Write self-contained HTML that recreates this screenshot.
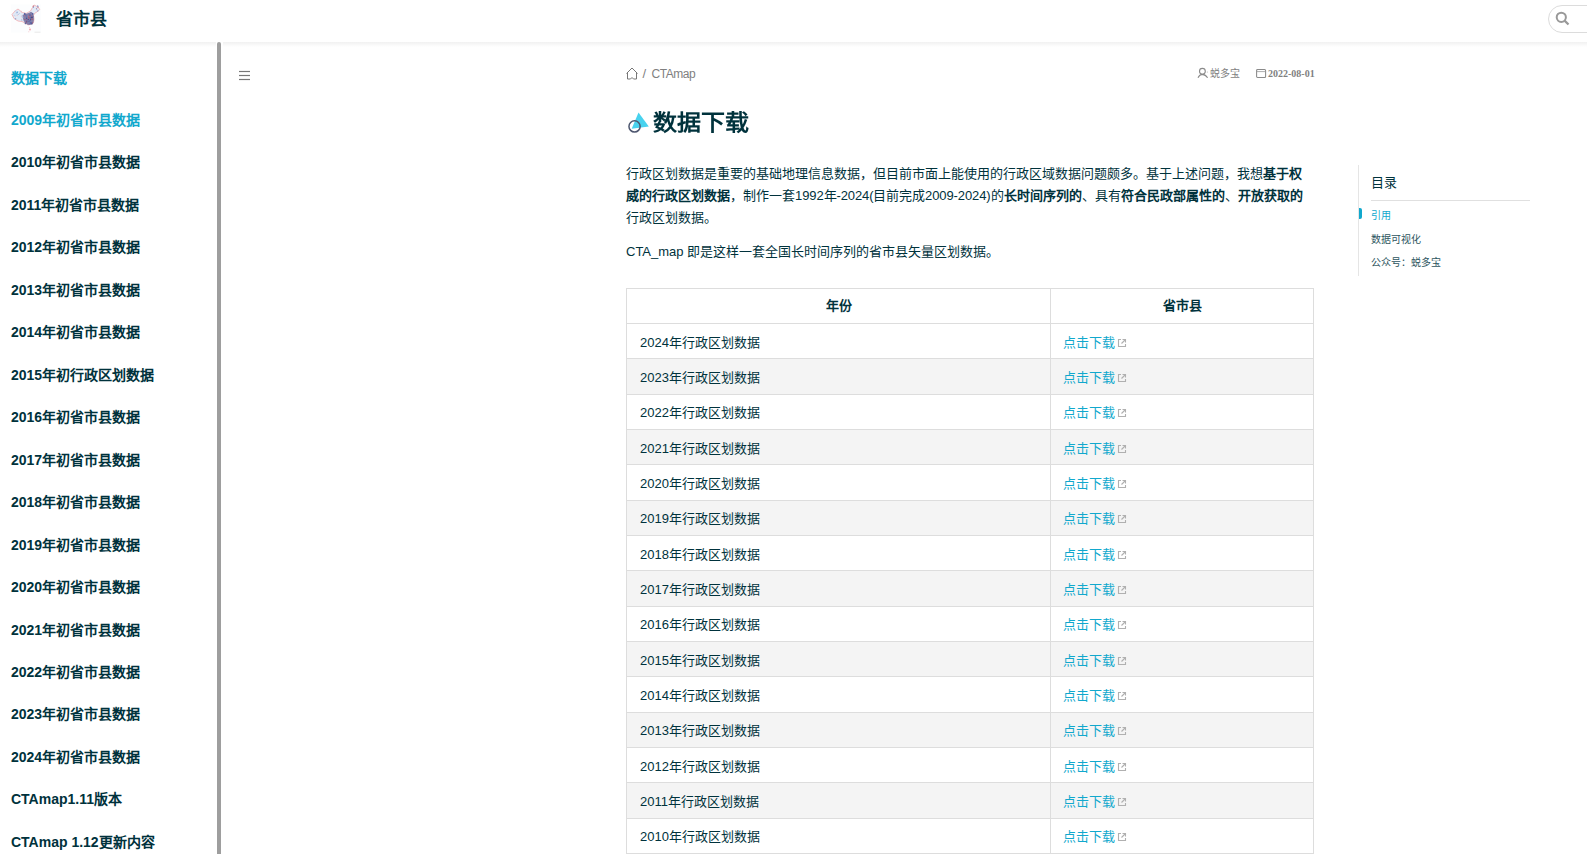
<!DOCTYPE html>
<html lang="zh-CN">
<head>
<meta charset="utf-8">
<title>数据下载 | 省市县</title>
<style>
html,body{margin:0;padding:0;}
body{width:1587px;height:854px;overflow:hidden;position:relative;background:#fff;font-family:"Liberation Sans",sans-serif;color:#00323c;}
.abs{position:absolute;white-space:nowrap;}
#hdr{position:absolute;left:0;top:0;width:1587px;height:42px;background:#fff;}
#hdrshadow{position:absolute;left:0;top:42px;width:1587px;height:5px;background:linear-gradient(#f1f1f1,rgba(255,255,255,0));}
#sitename{left:56px;top:9px;font-size:17px;line-height:22px;font-weight:bold;}
#search{position:absolute;left:1548px;top:5px;width:60px;height:28px;border:1px solid #dcdcdc;border-radius:14px;box-sizing:border-box;}
.side{left:11px;font-size:14px;line-height:20px;font-weight:bold;}
.side.act{color:#11a8cd;}
#track{position:absolute;left:216px;top:42px;width:7px;height:812px;background:#fff;}
#thumb{position:absolute;left:217px;top:42px;width:4px;height:830px;background:#9e9e9e;border-radius:2px;}
.gray{color:#7f7f7f;}
#title{left:653px;top:106px;font-size:24px;line-height:32px;font-weight:bold;transform:scaleY(0.88);transform-origin:0 27px;}
.para{position:absolute;left:626px;width:688px;font-size:13px;line-height:21.85px;}
.para b{font-weight:bold;}
a{color:#11a8cd;text-decoration:none;}
.toc{left:1371px;}
.hl{left:626px;width:688px;height:1px;background:#dddddd;}
.vl{top:288px;width:1px;height:566px;background:#dddddd;}
.th{text-align:center;font-size:13px;font-weight:bold;line-height:35.33px;}
.td{font-size:13px;line-height:35.33px;}
.ext{margin-left:1.5px;vertical-align:-1px;}
</style>
</head>
<body>
<div id="hdr"></div>
<div id="hdrshadow"></div>
<svg class="abs" style="left:10px;top:3px" width="34" height="32" viewBox="0 0 34 32">
 <defs><filter id="bl" x="-20%" y="-20%" width="140%" height="140%"><feGaussianBlur stdDeviation="0.4"/></filter></defs>
 <rect x="1" y="1.5" width="30" height="28" fill="#fcfdfe"/>
 <g filter="url(#bl)">
 <path d="M2,11.5 L5,8 L8,6 L10.5,8 L12.5,9.5 L16,10.5 L20.5,8 L22.5,4.5 L24,2 L28,4 L29.8,6.5 L27.5,8.5 L24.5,10.5 L23.5,12.5 L24,16 L23.5,19.5 L20,21.5 L18,22 L16,20.5 L12,18.5 L8,18 L4,15.5 Z" fill="#e2eaf6" stroke="#f2b4b8" stroke-width="0.9"/>
 <path d="M12.5,12 Q15,10.8 17,10.6 Q19.5,10 21,8.8 L23.3,10.2 Q23.6,12.5 23.8,14 Q24.3,17.5 23.2,20.2 Q21.5,21.8 19,22 Q17,22 15.5,20.3 Q13.5,18.5 13,16 Z" fill="#6c6496" opacity="0.8"/>
 <circle cx="16.5" cy="16.2" r="0.87" fill="#5a6ab0" opacity="0.7"/>
 <circle cx="18.5" cy="16.6" r="0.51" fill="#2f3f80" opacity="0.7"/>
 <circle cx="21.6" cy="13.2" r="0.58" fill="#b24a5c" opacity="0.7"/>
 <circle cx="20.6" cy="16.2" r="0.69" fill="#2f3f80" opacity="0.7"/>
 <circle cx="19.9" cy="12.1" r="0.85" fill="#b24a5c" opacity="0.7"/>
 <circle cx="18.9" cy="18.3" r="0.56" fill="#3f4f96" opacity="0.7"/>
 <circle cx="22.6" cy="10.9" r="0.83" fill="#3f4f96" opacity="0.7"/>
 <circle cx="16.8" cy="16.7" r="0.79" fill="#c86070" opacity="0.7"/>
 <circle cx="22.3" cy="14.6" r="0.68" fill="#2f3f80" opacity="0.7"/>
 <circle cx="22.5" cy="19.7" r="0.51" fill="#3f4f96" opacity="0.7"/>
 <circle cx="18.7" cy="13.2" r="0.81" fill="#c86070" opacity="0.7"/>
 <circle cx="21.8" cy="14.9" r="0.73" fill="#c86070" opacity="0.7"/>
 <circle cx="19.0" cy="14.8" r="0.86" fill="#b24a5c" opacity="0.7"/>
 <circle cx="20.3" cy="20.3" r="0.90" fill="#5a6ab0" opacity="0.7"/>
 <circle cx="20.2" cy="12.2" r="0.89" fill="#5a6ab0" opacity="0.7"/>
 <circle cx="22.2" cy="16.5" r="0.75" fill="#b24a5c" opacity="0.7"/>
 <circle cx="22.9" cy="13.3" r="0.53" fill="#3f4f96" opacity="0.7"/>
 <circle cx="21.8" cy="20.9" r="0.64" fill="#3f4f96" opacity="0.7"/>
 <circle cx="15.1" cy="19.9" r="0.62" fill="#3f4f96" opacity="0.7"/>
 <circle cx="21.0" cy="19.7" r="0.74" fill="#3f4f96" opacity="0.7"/>
 <circle cx="21.0" cy="14.5" r="0.63" fill="#2f3f80" opacity="0.7"/>
 <circle cx="22.0" cy="20.8" r="0.59" fill="#2f3f80" opacity="0.7"/>
 <circle cx="14.8" cy="10.6" r="0.74" fill="#3f4f96" opacity="0.7"/>
 <circle cx="14.8" cy="12.6" r="0.62" fill="#c86070" opacity="0.7"/>
 <circle cx="16.7" cy="17.7" r="0.63" fill="#5a6ab0" opacity="0.7"/>
 <circle cx="22.6" cy="19.9" r="0.65" fill="#c86070" opacity="0.7"/>
 <circle cx="21.9" cy="14.6" r="0.77" fill="#2f3f80" opacity="0.7"/>
 <circle cx="15.4" cy="20.7" r="0.61" fill="#2f3f80" opacity="0.7"/>
 <circle cx="19.9" cy="18.0" r="0.67" fill="#5a6ab0" opacity="0.7"/>
 <circle cx="16.7" cy="13.7" r="0.50" fill="#5a6ab0" opacity="0.7"/>
 <circle cx="18.0" cy="16.6" r="0.65" fill="#3f4f96" opacity="0.7"/>
 <circle cx="19.5" cy="11.9" r="0.69" fill="#5a6ab0" opacity="0.7"/>
 <circle cx="20.3" cy="14.2" r="0.80" fill="#5a6ab0" opacity="0.7"/>
 <circle cx="14.7" cy="11.1" r="0.89" fill="#3f4f96" opacity="0.7"/>
 <circle cx="16.6" cy="15.3" r="0.74" fill="#2f3f80" opacity="0.7"/>
 <circle cx="16.0" cy="12.4" r="0.84" fill="#5a6ab0" opacity="0.7"/>
 <circle cx="16.7" cy="18.8" r="0.81" fill="#3f4f96" opacity="0.7"/>
 <circle cx="14.7" cy="16.5" r="0.62" fill="#b24a5c" opacity="0.7"/>
 <circle cx="16.4" cy="18.9" r="0.63" fill="#b24a5c" opacity="0.7"/>
 <circle cx="20.3" cy="17.3" r="0.54" fill="#3f4f96" opacity="0.7"/>
 <circle cx="6.2" cy="10.7" r="0.58" fill="#c5d5f0" opacity="0.8"/>
 <circle cx="11.6" cy="9.1" r="0.70" fill="#f0c0c8" opacity="0.8"/>
 <circle cx="5.2" cy="12.9" r="0.49" fill="#f0c0c8" opacity="0.8"/>
 <circle cx="4.2" cy="12.5" r="0.53" fill="#c5d5f0" opacity="0.8"/>
 <circle cx="11.4" cy="13.0" r="0.54" fill="#f0c0c8" opacity="0.8"/>
 <circle cx="11.3" cy="8.3" r="0.64" fill="#f0c0c8" opacity="0.8"/>
 <circle cx="7.2" cy="12.4" r="0.59" fill="#f0c0c8" opacity="0.8"/>
 <circle cx="9.3" cy="10.3" r="0.41" fill="#7f9ad0" opacity="0.8"/>
 <circle cx="7.1" cy="9.4" r="0.78" fill="#7f9ad0" opacity="0.8"/>
 <circle cx="11.8" cy="16.9" r="0.62" fill="#7f9ad0" opacity="0.8"/>
 <circle cx="12.9" cy="14.3" r="0.70" fill="#9fb6e0" opacity="0.8"/>
 <circle cx="11.4" cy="13.8" r="0.62" fill="#f0c0c8" opacity="0.8"/>
 <circle cx="11.9" cy="15.7" r="0.45" fill="#f0c0c8" opacity="0.8"/>
 <circle cx="5.4" cy="7.8" r="0.76" fill="#c5d5f0" opacity="0.8"/>
 <circle cx="12.0" cy="13.0" r="0.59" fill="#9fb6e0" opacity="0.8"/>
 <circle cx="4.2" cy="12.3" r="0.67" fill="#c5d5f0" opacity="0.8"/>
 <circle cx="8.2" cy="11.4" r="0.54" fill="#9fb6e0" opacity="0.8"/>
 <circle cx="5.5" cy="15.7" r="0.72" fill="#7f9ad0" opacity="0.8"/>
 <circle cx="23.4" cy="4.3" r="0.61" fill="#6f86c8" opacity="0.8"/>
 <circle cx="27.9" cy="4.0" r="0.77" fill="#c06878" opacity="0.8"/>
 <circle cx="27.8" cy="7.9" r="0.60" fill="#6f86c8" opacity="0.8"/>
 <circle cx="26.4" cy="5.4" r="0.50" fill="#c06878" opacity="0.8"/>
 <circle cx="26.7" cy="6.1" r="0.59" fill="#6f86c8" opacity="0.8"/>
 <circle cx="27.7" cy="3.0" r="0.71" fill="#6f86c8" opacity="0.8"/>
 <circle cx="23.3" cy="3.3" r="0.79" fill="#c06878" opacity="0.8"/>
 <circle cx="28.1" cy="3.5" r="0.60" fill="#9fb6e0" opacity="0.8"/>
 <circle cx="20" cy="26.5" r="0.9" fill="#f3a0a8"/>
 <circle cx="19.3" cy="24.5" r="0.5" fill="#f6c0c4"/>
 <circle cx="18.8" cy="28.8" r="0.5" fill="#f6c0c4"/>
 <line x1="24.5" y1="29.2" x2="30.5" y2="29.2" stroke="#dcdcdc" stroke-width="0.6"/>
 </g>
</svg>
<div id="sitename" class="abs">省市县</div>
<div id="search"></div>
<svg class="abs" style="left:1555px;top:11px" width="16" height="16" viewBox="0 0 16 16"><circle cx="6.3" cy="6.3" r="4.6" fill="none" stroke="#999" stroke-width="2"/><line x1="9.6" y1="9.6" x2="13.5" y2="13.5" stroke="#999" stroke-width="2.2"/></svg>

<div class="abs side act" style="top:68.00px">数据下载</div>
<div class="abs side act" style="top:109.87px">2009年初省市县数据</div>
<div class="abs side" style="top:152.34px">2010年初省市县数据</div>
<div class="abs side" style="top:194.81px">2011年初省市县数据</div>
<div class="abs side" style="top:237.28px">2012年初省市县数据</div>
<div class="abs side" style="top:279.75px">2013年初省市县数据</div>
<div class="abs side" style="top:322.22px">2014年初省市县数据</div>
<div class="abs side" style="top:364.69px">2015年初行政区划数据</div>
<div class="abs side" style="top:407.16px">2016年初省市县数据</div>
<div class="abs side" style="top:449.63px">2017年初省市县数据</div>
<div class="abs side" style="top:492.10px">2018年初省市县数据</div>
<div class="abs side" style="top:534.57px">2019年初省市县数据</div>
<div class="abs side" style="top:577.04px">2020年初省市县数据</div>
<div class="abs side" style="top:619.51px">2021年初省市县数据</div>
<div class="abs side" style="top:661.98px">2022年初省市县数据</div>
<div class="abs side" style="top:704.45px">2023年初省市县数据</div>
<div class="abs side" style="top:746.92px">2024年初省市县数据</div>
<div class="abs side" style="top:789.39px">CTAmap1.11版本</div>
<div class="abs side" style="top:831.86px">CTAmap 1.12更新内容</div>
<div id="track"></div>
<div id="thumb"></div>

<svg class="abs" style="left:238px;top:70px" width="13" height="11" viewBox="0 0 13 11"><g stroke="#777" stroke-width="1.2"><line x1="1" y1="1.5" x2="12" y2="1.5"/><line x1="1" y1="5.5" x2="12" y2="5.5"/><line x1="1" y1="9.5" x2="12" y2="9.5"/></g></svg>

<svg class="abs" style="left:625px;top:67px" width="14" height="13" viewBox="0 0 14 13"><path d="M1.5,6.5 L7,1 L12.5,6.5 M2.5,5.5 V12 H5.5 L7,10.5 L8.5,12 H11.5 V5.5" fill="none" stroke="#777" stroke-width="1"/></svg>
<div class="abs gray" style="left:642.5px;top:66px;font-size:13px;line-height:16px">/</div><div class="abs gray" style="left:651.5px;top:66px;font-size:12px;line-height:16px;letter-spacing:-0.45px">CTAmap</div>
<svg class="abs" style="left:1197px;top:67px" width="12" height="12" viewBox="0 0 12 12"><circle cx="5.4" cy="4.3" r="2.9" fill="none" stroke="#8a8a8a" stroke-width="1.1"/><path d="M1,10.8 Q2.5,7.6 5.4,7.4 Q8.6,7.6 10.6,10.8" fill="none" stroke="#8a8a8a" stroke-width="1.1"/><circle cx="10.3" cy="5" r="0.5" fill="#aaa"/></svg>
<div class="abs gray" style="left:1210px;top:67px;font-size:10px;line-height:14px">蜕多宝</div>
<svg class="abs" style="left:1256px;top:68px" width="11" height="11" viewBox="0 0 11 11"><rect x="0.6" y="1.4" width="9" height="8" rx="1" fill="none" stroke="#8a8a8a" stroke-width="1.05"/><line x1="0.6" y1="3.6" x2="9.6" y2="3.6" stroke="#999" stroke-width="0.8"/></svg>
<div class="abs gray" style="left:1268px;top:67px;font-size:10px;line-height:14px;font-family:'Liberation Serif',serif;font-weight:bold">2022-08-01</div>

<svg class="abs" style="left:622px;top:106px" width="32" height="32" viewBox="0 0 32 32"><path d="M16.5,6.4 L26.8,20.4 L9.7,22.7 Z" fill="#48d2ee"/><circle cx="12.55" cy="20.4" r="5.6" fill="none" stroke="#4d566f" stroke-width="1.5"/></svg>
<div id="title" class="abs">数据下载</div>

<div class="para" style="top:163px">行政区划数据是重要的基础地理信息数据，但目前市面上能使用的行政区域数据问题颇多。基于上述问题，我想<b>基于权威的行政区划数据</b>，制作一套<span style="letter-spacing:-0.1px">1992年-2024(目前完成2009-2024)</span>的<b>长时间序列的</b>、具有<b>符合民政部属性的</b>、<b>开放获取的</b>行政区划数据。</div>
<div class="para" style="top:241px">CTA_map 即是这样一套全国长时间序列的省市县矢量区划数据。</div>

<div class="abs" style="left:626px;top:358px;width:687px;height:36px;background:#f4f4f4"></div>
<div class="abs" style="left:626px;top:429px;width:687px;height:35px;background:#f4f4f4"></div>
<div class="abs" style="left:626px;top:500px;width:687px;height:35px;background:#f4f4f4"></div>
<div class="abs" style="left:626px;top:570px;width:687px;height:36px;background:#f4f4f4"></div>
<div class="abs" style="left:626px;top:641px;width:687px;height:35px;background:#f4f4f4"></div>
<div class="abs" style="left:626px;top:712px;width:687px;height:35px;background:#f4f4f4"></div>
<div class="abs" style="left:626px;top:782px;width:687px;height:36px;background:#f4f4f4"></div>
<div class="abs hl" style="top:288px"></div>
<div class="abs hl" style="top:323px"></div>
<div class="abs hl" style="top:358px"></div>
<div class="abs hl" style="top:394px"></div>
<div class="abs hl" style="top:429px"></div>
<div class="abs hl" style="top:464px"></div>
<div class="abs hl" style="top:500px"></div>
<div class="abs hl" style="top:535px"></div>
<div class="abs hl" style="top:570px"></div>
<div class="abs hl" style="top:606px"></div>
<div class="abs hl" style="top:641px"></div>
<div class="abs hl" style="top:676px"></div>
<div class="abs hl" style="top:712px"></div>
<div class="abs hl" style="top:747px"></div>
<div class="abs hl" style="top:782px"></div>
<div class="abs hl" style="top:818px"></div>
<div class="abs hl" style="top:853px"></div>
<div class="abs vl" style="left:626px"></div>
<div class="abs vl" style="left:1050px"></div>
<div class="abs vl" style="left:1313px"></div>
<div class="abs th" style="left:627px;width:424px;top:288.000px">年份</div>
<div class="abs th" style="left:1051px;width:263px;top:288.000px">省市县</div>
<div class="abs td" style="left:640px;top:324.633px">2024年行政区划数据</div>
<div class="abs td" style="left:1062.5px;top:324.633px"><a style="letter-spacing:0.3px">点击下载</a><svg class="ext" width="10" height="10" viewBox="0 0 10 10"><path d="M5.5,1.5 H8.5 V4.5 M8.5,1.5 L4.5,5.5 M8.5,6 V8.5 H1.5 V1.5 H4" fill="none" stroke="#b0b0b0" stroke-width="1.1"/></svg></div>
<div class="abs td" style="left:640px;top:359.967px">2023年行政区划数据</div>
<div class="abs td" style="left:1062.5px;top:359.967px"><a style="letter-spacing:0.3px">点击下载</a><svg class="ext" width="10" height="10" viewBox="0 0 10 10"><path d="M5.5,1.5 H8.5 V4.5 M8.5,1.5 L4.5,5.5 M8.5,6 V8.5 H1.5 V1.5 H4" fill="none" stroke="#b0b0b0" stroke-width="1.1"/></svg></div>
<div class="abs td" style="left:640px;top:395.300px">2022年行政区划数据</div>
<div class="abs td" style="left:1062.5px;top:395.300px"><a style="letter-spacing:0.3px">点击下载</a><svg class="ext" width="10" height="10" viewBox="0 0 10 10"><path d="M5.5,1.5 H8.5 V4.5 M8.5,1.5 L4.5,5.5 M8.5,6 V8.5 H1.5 V1.5 H4" fill="none" stroke="#b0b0b0" stroke-width="1.1"/></svg></div>
<div class="abs td" style="left:640px;top:430.633px">2021年行政区划数据</div>
<div class="abs td" style="left:1062.5px;top:430.633px"><a style="letter-spacing:0.3px">点击下载</a><svg class="ext" width="10" height="10" viewBox="0 0 10 10"><path d="M5.5,1.5 H8.5 V4.5 M8.5,1.5 L4.5,5.5 M8.5,6 V8.5 H1.5 V1.5 H4" fill="none" stroke="#b0b0b0" stroke-width="1.1"/></svg></div>
<div class="abs td" style="left:640px;top:465.967px">2020年行政区划数据</div>
<div class="abs td" style="left:1062.5px;top:465.967px"><a style="letter-spacing:0.3px">点击下载</a><svg class="ext" width="10" height="10" viewBox="0 0 10 10"><path d="M5.5,1.5 H8.5 V4.5 M8.5,1.5 L4.5,5.5 M8.5,6 V8.5 H1.5 V1.5 H4" fill="none" stroke="#b0b0b0" stroke-width="1.1"/></svg></div>
<div class="abs td" style="left:640px;top:501.300px">2019年行政区划数据</div>
<div class="abs td" style="left:1062.5px;top:501.300px"><a style="letter-spacing:0.3px">点击下载</a><svg class="ext" width="10" height="10" viewBox="0 0 10 10"><path d="M5.5,1.5 H8.5 V4.5 M8.5,1.5 L4.5,5.5 M8.5,6 V8.5 H1.5 V1.5 H4" fill="none" stroke="#b0b0b0" stroke-width="1.1"/></svg></div>
<div class="abs td" style="left:640px;top:536.633px">2018年行政区划数据</div>
<div class="abs td" style="left:1062.5px;top:536.633px"><a style="letter-spacing:0.3px">点击下载</a><svg class="ext" width="10" height="10" viewBox="0 0 10 10"><path d="M5.5,1.5 H8.5 V4.5 M8.5,1.5 L4.5,5.5 M8.5,6 V8.5 H1.5 V1.5 H4" fill="none" stroke="#b0b0b0" stroke-width="1.1"/></svg></div>
<div class="abs td" style="left:640px;top:571.967px">2017年行政区划数据</div>
<div class="abs td" style="left:1062.5px;top:571.967px"><a style="letter-spacing:0.3px">点击下载</a><svg class="ext" width="10" height="10" viewBox="0 0 10 10"><path d="M5.5,1.5 H8.5 V4.5 M8.5,1.5 L4.5,5.5 M8.5,6 V8.5 H1.5 V1.5 H4" fill="none" stroke="#b0b0b0" stroke-width="1.1"/></svg></div>
<div class="abs td" style="left:640px;top:607.300px">2016年行政区划数据</div>
<div class="abs td" style="left:1062.5px;top:607.300px"><a style="letter-spacing:0.3px">点击下载</a><svg class="ext" width="10" height="10" viewBox="0 0 10 10"><path d="M5.5,1.5 H8.5 V4.5 M8.5,1.5 L4.5,5.5 M8.5,6 V8.5 H1.5 V1.5 H4" fill="none" stroke="#b0b0b0" stroke-width="1.1"/></svg></div>
<div class="abs td" style="left:640px;top:642.633px">2015年行政区划数据</div>
<div class="abs td" style="left:1062.5px;top:642.633px"><a style="letter-spacing:0.3px">点击下载</a><svg class="ext" width="10" height="10" viewBox="0 0 10 10"><path d="M5.5,1.5 H8.5 V4.5 M8.5,1.5 L4.5,5.5 M8.5,6 V8.5 H1.5 V1.5 H4" fill="none" stroke="#b0b0b0" stroke-width="1.1"/></svg></div>
<div class="abs td" style="left:640px;top:677.967px">2014年行政区划数据</div>
<div class="abs td" style="left:1062.5px;top:677.967px"><a style="letter-spacing:0.3px">点击下载</a><svg class="ext" width="10" height="10" viewBox="0 0 10 10"><path d="M5.5,1.5 H8.5 V4.5 M8.5,1.5 L4.5,5.5 M8.5,6 V8.5 H1.5 V1.5 H4" fill="none" stroke="#b0b0b0" stroke-width="1.1"/></svg></div>
<div class="abs td" style="left:640px;top:713.300px">2013年行政区划数据</div>
<div class="abs td" style="left:1062.5px;top:713.300px"><a style="letter-spacing:0.3px">点击下载</a><svg class="ext" width="10" height="10" viewBox="0 0 10 10"><path d="M5.5,1.5 H8.5 V4.5 M8.5,1.5 L4.5,5.5 M8.5,6 V8.5 H1.5 V1.5 H4" fill="none" stroke="#b0b0b0" stroke-width="1.1"/></svg></div>
<div class="abs td" style="left:640px;top:748.633px">2012年行政区划数据</div>
<div class="abs td" style="left:1062.5px;top:748.633px"><a style="letter-spacing:0.3px">点击下载</a><svg class="ext" width="10" height="10" viewBox="0 0 10 10"><path d="M5.5,1.5 H8.5 V4.5 M8.5,1.5 L4.5,5.5 M8.5,6 V8.5 H1.5 V1.5 H4" fill="none" stroke="#b0b0b0" stroke-width="1.1"/></svg></div>
<div class="abs td" style="left:640px;top:783.967px">2011年行政区划数据</div>
<div class="abs td" style="left:1062.5px;top:783.967px"><a style="letter-spacing:0.3px">点击下载</a><svg class="ext" width="10" height="10" viewBox="0 0 10 10"><path d="M5.5,1.5 H8.5 V4.5 M8.5,1.5 L4.5,5.5 M8.5,6 V8.5 H1.5 V1.5 H4" fill="none" stroke="#b0b0b0" stroke-width="1.1"/></svg></div>
<div class="abs td" style="left:640px;top:819.300px">2010年行政区划数据</div>
<div class="abs td" style="left:1062.5px;top:819.300px"><a style="letter-spacing:0.3px">点击下载</a><svg class="ext" width="10" height="10" viewBox="0 0 10 10"><path d="M5.5,1.5 H8.5 V4.5 M8.5,1.5 L4.5,5.5 M8.5,6 V8.5 H1.5 V1.5 H4" fill="none" stroke="#b0b0b0" stroke-width="1.1"/></svg></div>

<div class="abs" style="left:1358px;top:165px;width:1px;height:111px;background:#e5e5e5"></div>
<div class="abs" style="left:1359px;top:208px;width:3px;height:11px;background:#11a8cd;border-radius:0 2px 2px 0"></div>
<div class="abs toc" style="top:174px;font-size:13px;line-height:18px">目录</div>
<div class="abs" style="left:1371px;top:200px;width:159px;height:1px;background:#e0e0e0"></div>
<div class="abs toc" style="top:209px;font-size:10px;line-height:14px;color:#11a8cd">引用</div>
<div class="abs toc" style="top:232.5px;font-size:10px;line-height:14px;color:#2d5560">数据可视化</div>
<div class="abs toc" style="top:256px;font-size:10px;line-height:14px;color:#2d5560">公众号：蜕多宝</div>
</body>
</html>
